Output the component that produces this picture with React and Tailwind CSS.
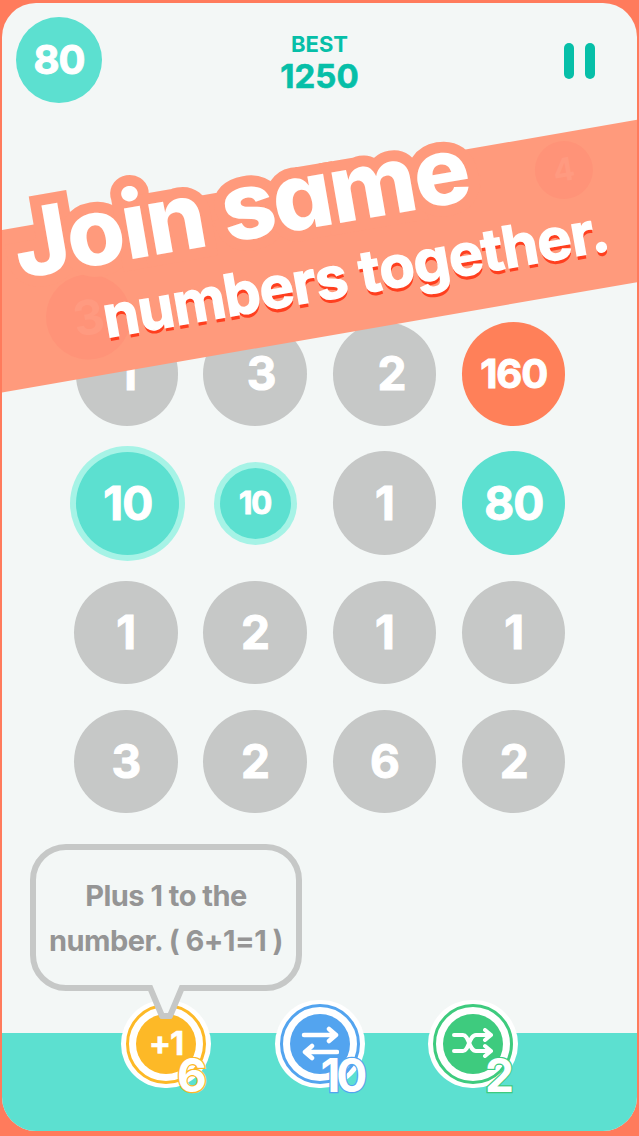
const tiles = [
  [
    { n: '1', ox: 'ml-[2px]' },
    { n: '3', tx: 'pl-[12px]' },
    { n: '2', tx: 'pl-[14px]' },
    { n: '160', bg: 'bg-[#ff8059]', size: 'text-[40px]' },
  ],
  [
    { n: '10', big: true },
    { n: '10', small: true },
    { n: '1' },
    { n: '80', bg: 'bg-[#5ce0d0]' },
  ],
  [{ n: '1' }, { n: '2' }, { n: '1' }, { n: '1' }],
  [{ n: '3' }, { n: '2' }, { n: '6' }, { n: '2' }],
];

function Tile({ t }) {
  if (t.big) {
    return (
      <div className="flex items-center justify-center">
        <div className="ml-[4px] w-[103px] h-[103px] shrink-0 rounded-full bg-[#5ce0d0] ring-[6px] ring-[#a6f3e6] flex items-center justify-center text-white text-[46px] font-bold tracking-[-1px] [-webkit-text-stroke:1px_#fff]">
          {t.n}
        </div>
      </div>
    );
  }
  if (t.small) {
    return (
      <div className="flex items-center justify-center">
        <div className="w-[71px] h-[71px] rounded-full bg-[#5ce0d0] ring-[6px] ring-[#a6f3e6] flex items-center justify-center text-white text-[31px] font-bold tracking-[-1px] [-webkit-text-stroke:1px_#fff]">
          {t.n}
        </div>
      </div>
    );
  }
  return (
    <div
      className={`rounded-full flex items-center justify-center text-white font-bold tracking-[-1px] [-webkit-text-stroke:1px_#fff] ${t.bg || 'bg-[#c6c8c7]'} ${t.size || 'text-[46px]'} ${t.ox || ''} ${t.tx || ''}`}
    >
      {t.n}
    </div>
  );
}

function SwapIcon() {
  return (
    <svg width="38" height="36" viewBox="0 0 38 36" fill="none" stroke="#fff" strokeWidth="4.5" strokeLinecap="round" strokeLinejoin="round">
      <path d="M3 9h32M28 3l7 6-7 6M36 26H4M11 20l-7 6 7 6" />
    </svg>
  );
}

function ShuffleIcon() {
  return (
    <svg className="mb-[3px]" width="42" height="30" viewBox="0 0 42 30" fill="none" stroke="#fff" strokeWidth="4" strokeLinecap="round" strokeLinejoin="round">
      <path d="M2 7h9c6 0 6 16 13 16h15M2 23h9c6 0 6-16 13-16h15M33 2l6 5-6 5M33 18l6 5-6 5" />
    </svg>
  );
}

function Tool({ ring, fill, text, count, countClass, children }) {
  return (
    <div className="relative w-[90px] h-[88px] rounded-full bg-white flex items-center justify-center">
      <div className={`w-[80px] h-[80px] rounded-full border-[3px] ${ring} flex items-center justify-center`}>
        <div className={`w-[60px] h-[60px] rounded-full ${fill} flex items-center justify-center text-white text-[33px] font-bold tracking-[-1px] [-webkit-text-stroke:0.5px_#fff]`}>
          {children || text}
        </div>
      </div>
      <span className={`absolute top-[45px] text-white text-[46px] leading-[60px] font-bold tracking-[-4px] [paint-order:stroke_fill] ${countClass}`}>
        {count}
      </span>
    </div>
  );
}

export default function App() {
  return (
    <div className="w-[639px] h-[1136px] bg-[#ff7b5c] pt-[3px] pb-[5px] px-[2px] [font-family:Inter,sans-serif]">
      <div className="relative h-full rounded-[34px] overflow-hidden bg-[#f3f7f6] flex flex-col">
        {/* top bar */}
        <div className="grid grid-cols-3 px-[14px] pt-[14px]">
          <div className="w-[86px] h-[86px] rounded-full bg-[#5ce0d0] flex items-center justify-center text-white text-[40px] font-bold tracking-[-1px] [-webkit-text-stroke:1px_#fff]">
            80
          </div>
          <div className="flex flex-col items-center pt-[14px] text-[#06bfa8] font-bold">
            <span className="text-[22px] leading-[26px]">BEST</span>
            <span className="text-[33px] leading-[38px] [-webkit-text-stroke:0.6px_#06bfa8]">1250</span>
          </div>
          <div className="flex justify-end gap-[11px] pt-[26px] pr-[28px]">
            <div className="w-[10px] h-[36px] rounded-full bg-[#06bfa8]" />
            <div className="w-[10px] h-[36px] rounded-full bg-[#06bfa8]" />
          </div>
        </div>

        {/* board */}
        <div className="mt-[219px] ml-[72px] grid grid-cols-[repeat(4,103.5px)] auto-rows-[103.5px] gap-[25.83px]">
          {tiles.flat().map((t, i) => (
            <Tile key={i} t={t} />
          ))}
        </div>

        {/* tooltip */}
        <div className="relative z-10 mt-[31px] ml-[28px] w-[272px] h-[147px] rounded-[36px] border-[6px] border-[#c6c8c7] bg-[#f3f7f6] flex flex-col items-center justify-center text-[#959595] text-[29px] leading-[45px] font-bold tracking-[-0.5px]">
          <span>Plus 1 to the</span>
          <span>number. ( 6+1=1 )</span>
          <svg className="absolute left-[110px] top-[135px]" width="40" height="36" viewBox="0 0 40 36" fill="#f3f7f6" stroke="#c6c8c7" strokeWidth="6" strokeLinejoin="round">
            <path d="M3 0l13 31h8L37 0" />
          </svg>
        </div>

        {/* tool bar */}
        <div className="mt-auto h-[98px] bg-[#5ce0d0] pl-[119px] flex items-start">
          <div className="-mt-[33px] flex gap-[63.5px]">
            <Tool ring="border-[#fdb927]" fill="bg-[#fdb927]" text="+1" count="6" countClass="left-[56px] [-webkit-text-stroke:2.5px_#fdb927]" />
            <Tool ring="border-[#53a4ef]" fill="bg-[#53a4ef]" count="10" countClass="left-[46px] [-webkit-text-stroke:2.5px_#53a4ef]">
              <SwapIcon />
            </Tool>
            <Tool ring="border-[#3ecb7e]" fill="bg-[#3ecb7e]" count="2" countClass="left-[57px] [-webkit-text-stroke:2.5px_#3ecb7e]">
              <ShuffleIcon />
            </Tool>
          </div>
        </div>

        {/* promo banner */}
        <div className="absolute z-20 left-[-42px] top-[173px] w-[720px] h-[160px] rotate-[-9.85deg] bg-[#ff9a7c]">
          <div className="absolute left-[79px] top-[58px] w-[85px] h-[85px] rounded-full bg-[#ff9378] flex items-center justify-center text-[#ff9a80] text-[48px] font-bold">
            3
          </div>
          <div className="absolute left-[586px] top-[8px] w-[58px] h-[58px] rounded-full bg-[#ff9378] flex items-center justify-center text-[#ff9a80] text-[32px] font-bold">
            4
          </div>
          <div className="absolute left-[60px] top-[-48px] whitespace-nowrap text-white text-[94px] leading-[130px] font-extrabold tracking-[-2px] [font-feature-settings:'cv11'] [-webkit-text-stroke:22px_#ff9a7c] [paint-order:stroke_fill]">
            Join same
          </div>
          <div className="absolute left-[136px] top-[63px] whitespace-nowrap text-white text-[57.5px] leading-[80px] font-bold tracking-[-0.5px] [-webkit-text-stroke:1.5px_#fff] [text-shadow:0_4px_0_#ff3f1f]">
            numbers together.
          </div>
        </div>
      </div>
    </div>
  );
}
